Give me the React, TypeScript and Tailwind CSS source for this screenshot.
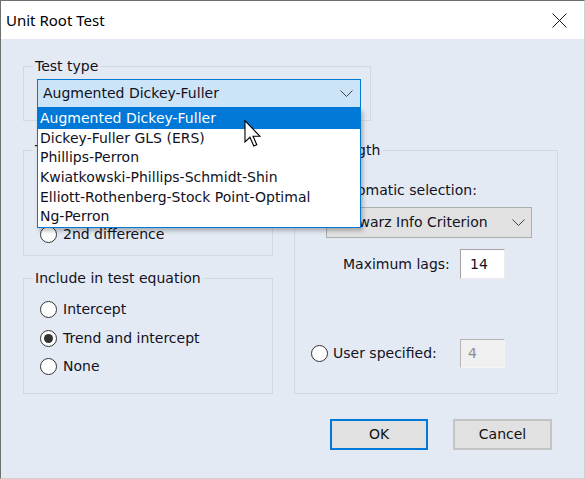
const TEST_TYPES = [
  'Augmented Dickey-Fuller',
  'Dickey-Fuller GLS (ERS)',
  'Phillips-Perron',
  'Kwiatkowski-Phillips-Schmidt-Shin',
  'Elliott-Rothenberg-Stock Point-Optimal',
  'Ng-Perron',
];

function Radio({ checked = false }: { checked?: boolean }) {
  return (
    <span className="flex h-[17px] w-[17px] shrink-0 items-center justify-center rounded-full border border-[#333333] bg-white">
      {checked && <span className="h-[9px] w-[9px] rounded-full bg-[#333333]" />}
    </span>
  );
}

function RadioRow({ label, checked }: { label: string; checked?: boolean }) {
  return (
    <div className="flex h-[28.5px] items-center gap-[6px]">
      <Radio checked={checked} />
      <span>{label}</span>
    </div>
  );
}

function Chevron() {
  return (
    <svg width="13" height="7" viewBox="0 0 13 7" fill="none">
      <path d="M0.5 0.5 L6.5 6.5 L12.5 0.5" stroke="#444" strokeWidth="1" />
    </svg>
  );
}

function Group({ title, className, children }: { title: string; className?: string; children: React.ReactNode }) {
  return (
    <fieldset className={`m-0 min-w-0 shrink-0 border border-[#d3d9e1] p-0 ${className ?? ''}`}>
      <legend className="ml-[9px] px-[2px] leading-[17px]">{title}</legend>
      {children}
    </fieldset>
  );
}

export default function App() {
  return (
    <div className="relative flex h-[479px] w-[585px] flex-col overflow-hidden border-t border-l border-r border-b border-t-[#6f6f6f] border-l-[#6f6f6f] border-r-[#cfcfcf] border-b-[#cfcfcf] bg-[#e4eaf3] font-['DejaVu_Sans',sans-serif] text-[14px] text-[#111122]">
      {/* title bar */}
      <div className="flex h-[38px] shrink-0 items-center justify-between bg-white pl-[5px] pr-[17px]">
        <span className="font-['Noto_Sans',sans-serif] text-[15px] text-black">Unit Root Test</span>
        <svg width="15" height="15" viewBox="0 0 15 15">
          <path d="M0.5 0.5 L14.5 14.5 M14.5 0.5 L0.5 14.5" stroke="#111" strokeWidth="1" />
        </svg>
      </div>

      <div className="flex flex-col pl-[22px] pr-[26px] pt-[18.5px]">
        {/* test type */}
        <Group title="Test type" className="w-[348px]">
          <div className="pl-[13px] pr-[9px] pt-[4.5px] pb-[12px]">
            <div className="relative">
              <div className="flex h-[29px] items-center justify-between border border-[#0078d7] bg-[#cce4f7] pl-[5px] pr-[7px]">
                <span>Augmented Dickey-Fuller</span>
                <Chevron />
              </div>
              <ul className="absolute top-full left-0 z-10 w-full border border-[#0078d7] bg-white shadow-[2px_3px_4px_rgba(0,0,0,0.25)]">
                {TEST_TYPES.map((t, i) => (
                  <li
                    key={t}
                    className={`flex h-[19.6px] items-center pl-[2px] ${i === 0 ? 'bg-[#0078d7] text-white' : ''}`}
                  >
                    {t}
                  </li>
                ))}
              </ul>
            </div>
          </div>
        </Group>

        <div className="mt-[20.5px] flex gap-[21px]">
          {/* left column */}
          <div className="flex w-[250px] shrink-0 flex-col">
            <Group title="Test for unit root in">
              <div className="px-[16px] pt-[5px] pb-[6px]">
                <RadioRow label="Level" checked />
                <RadioRow label="1st difference" />
                <RadioRow label="2nd difference" />
              </div>
            </Group>
            <Group title="Include in test equation" className="mt-[13.5px]">
              <div className="px-[16px] pt-[9px] pb-[12px]">
                <RadioRow label="Intercept" />
                <RadioRow label="Trend and intercept" checked />
                <RadioRow label="None" />
              </div>
            </Group>
          </div>

          {/* lag length */}
          <Group title="Lag length" className="w-[264px]">
            <div className="flex flex-col pl-[16px] pt-[21.5px] pb-[24px]">
              <div className="flex h-[20px] items-center gap-[5px]">
                <Radio checked />
                <span>Automatic selection:</span>
              </div>
              <div className="mt-[7px] ml-[15px] flex h-[31px] w-[206px] items-center justify-between border border-[#adadad] bg-[#e1e1e1] pl-[6px] pr-[6px]">
                <span>Schwarz Info Criterion</span>
                <Chevron />
              </div>
              <div className="mt-[11px] ml-[32px] flex items-center">
                <span className="w-[117px]">Maximum lags:</span>
                <div className="flex h-[30px] w-[45px] items-center border border-t-[#a3a3a3] border-l-[#a3a3a3] border-r-[#ececec] border-b-[#ececec] bg-white pl-[9px]">
                  14
                </div>
              </div>
              <div className="mt-[60px] flex items-center">
                <div className="flex w-[149px] items-center gap-[5px]">
                  <Radio />
                  <span>User specified:</span>
                </div>
                <div className="flex h-[29px] w-[45px] items-center border border-t-[#b5b5b5] border-l-[#b5b5b5] border-r-[#f4f4f4] border-b-[#f4f4f4] bg-[#f0f0f0] pl-[7px] text-[#8d8d8d]">
                  4
                </div>
              </div>
            </div>
          </Group>
        </div>

        {/* buttons */}
        <div className="mt-[25px] mr-[6px] flex justify-end gap-[25px]">
          <button className="h-[31px] w-[98px] border-2 border-[#0078d7] bg-[#e1e1e1] text-[#111]">OK</button>
          <button className="h-[31px] w-[99px] border-2 border-[#c4c4c4] bg-[#e1e1e1] text-[#111]">Cancel</button>
        </div>
      </div>

      {/* mouse pointer */}
      <svg className="absolute top-[119px] left-[243px] z-20" width="19" height="27" viewBox="0 0 13 19">
        <path d="M0.5 0.5 L0.5 15.5 L4 12.2 L6.7 18.3 L8.8 17.4 L6.2 11.4 L11 11.4 Z" fill="white" stroke="black" strokeWidth="0.8" strokeLinejoin="miter" />
      </svg>
    </div>
  );
}
